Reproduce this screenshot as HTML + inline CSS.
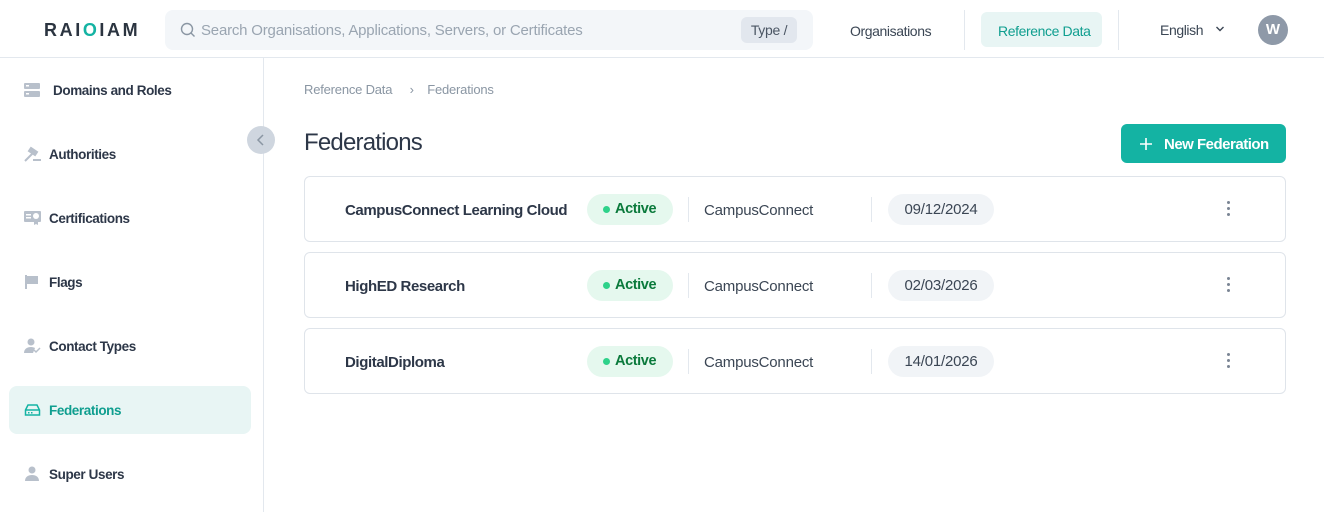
<!DOCTYPE html>
<html><head><style>
*{box-sizing:border-box;margin:0;padding:0}
body{width:1324px;height:512px;overflow:hidden;background:#fff;font-family:"Liberation Sans",sans-serif;color:#2d3748;position:relative}
.a{position:absolute}
.hdr{left:0;top:0;width:1324px;height:58px;border-bottom:1px solid #e3e8ee}
.logo{left:44px;top:20px;font-size:18px;font-weight:bold;letter-spacing:2.6px;color:#2b3440}
.search{left:165px;top:10px;width:648px;height:40px;background:#f3f6f9;border-radius:8px}
.search span{position:absolute;left:36px;top:12px;font-size:15px;color:#9aa5b1;letter-spacing:-0.2px}
.type{left:741px;top:17px;width:56px;height:26px;background:#e2e7ee;border-radius:6px;font-size:14px;color:#4a5563;text-align:center;line-height:26px;letter-spacing:-0.3px}
.nav{font-size:14px;color:#3b4654;letter-spacing:-0.4px}
.vd{width:1px;background:#e3e8ee}
.side{left:0;top:58px;width:264px;height:454px;border-right:1px solid #e3e8ee}
.it{left:24px;font-size:13.5px;color:#2d3748;font-weight:bold;letter-spacing:-0.4px}
.it svg{position:absolute;left:0;top:0}
.it span{position:absolute;left:25px;top:1px;white-space:nowrap}
.card{left:304px;width:982px;height:66px;border:1px solid #dfe4ea;border-radius:6px}
.nm{left:40px;top:25px;font-size:15px;font-weight:bold;color:#2d3748;letter-spacing:-0.4px}
.act{left:282px;top:17px;width:86px;height:31px;background:#e5f8ee;border-radius:16px;font-size:14.5px;font-weight:bold;color:#0b7a3c;line-height:31px;padding-left:28px;letter-spacing:-0.4px}
.act:before{content:"";position:absolute;left:16px;top:12px;width:7px;height:7px;border-radius:50%;background:#2ed28a}
.cc{left:399px;top:25px;font-size:15px;color:#3b4654;letter-spacing:-0.2px}
.dt{left:583px;top:17px;width:106px;height:31px;background:#f1f4f7;border-radius:16px;font-size:15px;color:#3b4654;text-align:center;line-height:32px;letter-spacing:-0.2px}
.kb{left:922px;top:24px;width:4px}
.kb i{display:block;width:3px;height:3px;border-radius:50%;background:#7a8594;margin-bottom:3px}
</style></head><body>
<div class="a hdr"></div>
<div class="a logo">RAI<span style="color:#14b3a3">O</span>IAM</div>
<div class="a search"><svg class="a" style="left:15px;top:12px" width="16" height="16" viewBox="0 0 16 16"><circle cx="7" cy="7" r="5.5" fill="none" stroke="#8a96a3" stroke-width="1.4"/><path d="M11 11l3.5 3.5" stroke="#8a96a3" stroke-width="1.4"/></svg><span>Search Organisations, Applications, Servers, or Certificates</span></div>
<div class="a type">Type /</div>
<div class="a nav" style="left:850px;top:23px">Organisations</div>
<div class="a vd" style="left:964px;top:10px;height:40px"></div>
<div class="a" style="left:981px;top:12px;width:121px;height:35px;background:#e8f5f4;border-radius:6px"></div>
<div class="a nav" style="left:998px;top:23px;color:#0f9e8f">Reference Data</div>
<div class="a vd" style="left:1118px;top:10px;height:40px"></div>
<div class="a nav" style="left:1160px;top:22px">English</div>
<svg class="a" style="left:1215px;top:25px" width="10" height="8" viewBox="0 0 10 8"><path d="M1.5 2l3.5 3.5L8.5 2" fill="none" stroke="#3b4654" stroke-width="1.4"/></svg>
<div class="a" style="left:1258px;top:15px;width:30px;height:30px;border-radius:50%;background:#8e99a8;color:#fff;font-weight:bold;font-size:15px;text-align:center;line-height:30px">W</div>

<div class="a side"></div>
<div class="a" style="left:9px;top:386px;width:242px;height:48px;background:#e8f5f4;border-radius:8px"></div>
<div class="a" style="left:247px;top:126px;width:28px;height:28px;border-radius:50%;background:#cfd6df"></div>
<svg class="a" style="left:255px;top:133px" width="12" height="14" viewBox="0 0 12 14"><path d="M8 2L3 7l5 5" fill="none" stroke="#8a96a3" stroke-width="1.5"/></svg>

<div class="a it" style="top:82px"><svg width="16" height="16" viewBox="0 0 16 16"><rect x="0" y="1" width="16" height="6" rx="1" fill="#b8c0cb"/><rect x="0" y="9" width="16" height="6" rx="1" fill="#b8c0cb"/><rect x="2" y="3" width="3" height="1.5" fill="#fff"/><rect x="2" y="11" width="3" height="1.5" fill="#fff"/></svg><span style="left:29px">Domains and Roles</span></div>
<div class="a it" style="top:146px"><svg width="18" height="18" viewBox="0 0 18 18"><path d="M7 2l6 4-2 3-6-4z M9 7l-8 8" stroke="#b8c0cb" stroke-width="2" fill="#b8c0cb"/><rect x="9" y="13" width="8" height="2" fill="#b8c0cb"/></svg><span>Authorities</span></div>
<div class="a it" style="top:210px"><svg width="18" height="16" viewBox="0 0 18 16"><rect x="0" y="1" width="17" height="11" rx="1" fill="#b8c0cb"/><rect x="2" y="4" width="5" height="1.5" fill="#fff"/><rect x="2" y="7" width="5" height="1.5" fill="#fff"/><circle cx="12" cy="6" r="3" fill="#fff"/><path d="M10 10v5l2-1 2 1v-5" fill="#b8c0cb"/></svg><span>Certifications</span></div>
<div class="a it" style="top:274px"><svg width="16" height="16" viewBox="0 0 16 16"><path d="M2 1v14" stroke="#b8c0cb" stroke-width="2"/><path d="M3 2h11v8H3z" fill="#b8c0cb"/></svg><span>Flags</span></div>
<div class="a it" style="top:338px"><svg width="18" height="16" viewBox="0 0 18 16"><circle cx="7" cy="4" r="3.5" fill="#b8c0cb"/><path d="M0 15c0-4 3-6 7-6 2 0 3 .5 4 1l-2 5z" fill="#b8c0cb"/><path d="M10 12l2 2 4-4" fill="none" stroke="#b8c0cb" stroke-width="1.5"/></svg><span>Contact Types</span></div>
<div class="a it" style="top:402px;color:#0f9e8f"><svg width="17" height="16" viewBox="0 0 17 16"><path d="M1.5 8L4 3h9l2.5 5v5h-14z M1.5 8h14" fill="none" stroke="#14b3a3" stroke-width="1.5"/><rect x="4" y="10" width="1.5" height="1.5" fill="#14b3a3"/><rect x="7" y="10" width="1.5" height="1.5" fill="#14b3a3"/></svg><span>Federations</span></div>
<div class="a it" style="top:466px"><svg width="16" height="16" viewBox="0 0 16 16"><circle cx="8" cy="4" r="3.5" fill="#b8c0cb"/><path d="M1 15c0-4 3-6 7-6s7 2 7 6z" fill="#b8c0cb"/></svg><span>Super Users</span></div>

<div class="a" style="left:304px;top:82px;font-size:13px;color:#8a96a3;letter-spacing:-0.2px">Reference Data <span style="margin:0 10px 0 14px">›</span> Federations</div>
<div class="a" style="left:304px;top:129px;font-size:24px;color:#2d3748;letter-spacing:-0.8px">Federations</div>
<div class="a" style="left:1121px;top:124px;width:165px;height:39px;background:#14b3a3;border-radius:6px;color:#fff;font-size:15px;font-weight:bold;line-height:41px;padding-left:43px;letter-spacing:-0.5px">New Federation</div>
<svg class="a" style="left:1139px;top:137px" width="14" height="14" viewBox="0 0 14 14"><path d="M7 1v12M1 7h12" stroke="#fff" stroke-width="1.6"/></svg>

<div class="a card" style="top:176px"><div class="a nm">CampusConnect Learning Cloud</div><div class="a act">Active</div><div class="a vd" style="left:383px;top:20px;height:25px"></div><div class="a cc">CampusConnect</div><div class="a vd" style="left:566px;top:20px;height:25px"></div><div class="a dt">09/12/2024</div><div class="a kb"><i></i><i></i><i></i></div></div>
<div class="a card" style="top:252px"><div class="a nm">HighED Research</div><div class="a act">Active</div><div class="a vd" style="left:383px;top:20px;height:25px"></div><div class="a cc">CampusConnect</div><div class="a vd" style="left:566px;top:20px;height:25px"></div><div class="a dt">02/03/2026</div><div class="a kb"><i></i><i></i><i></i></div></div>
<div class="a card" style="top:328px"><div class="a nm">DigitalDiploma</div><div class="a act">Active</div><div class="a vd" style="left:383px;top:20px;height:25px"></div><div class="a cc">CampusConnect</div><div class="a vd" style="left:566px;top:20px;height:25px"></div><div class="a dt">14/01/2026</div><div class="a kb"><i></i><i></i><i></i></div></div>
</body></html>
